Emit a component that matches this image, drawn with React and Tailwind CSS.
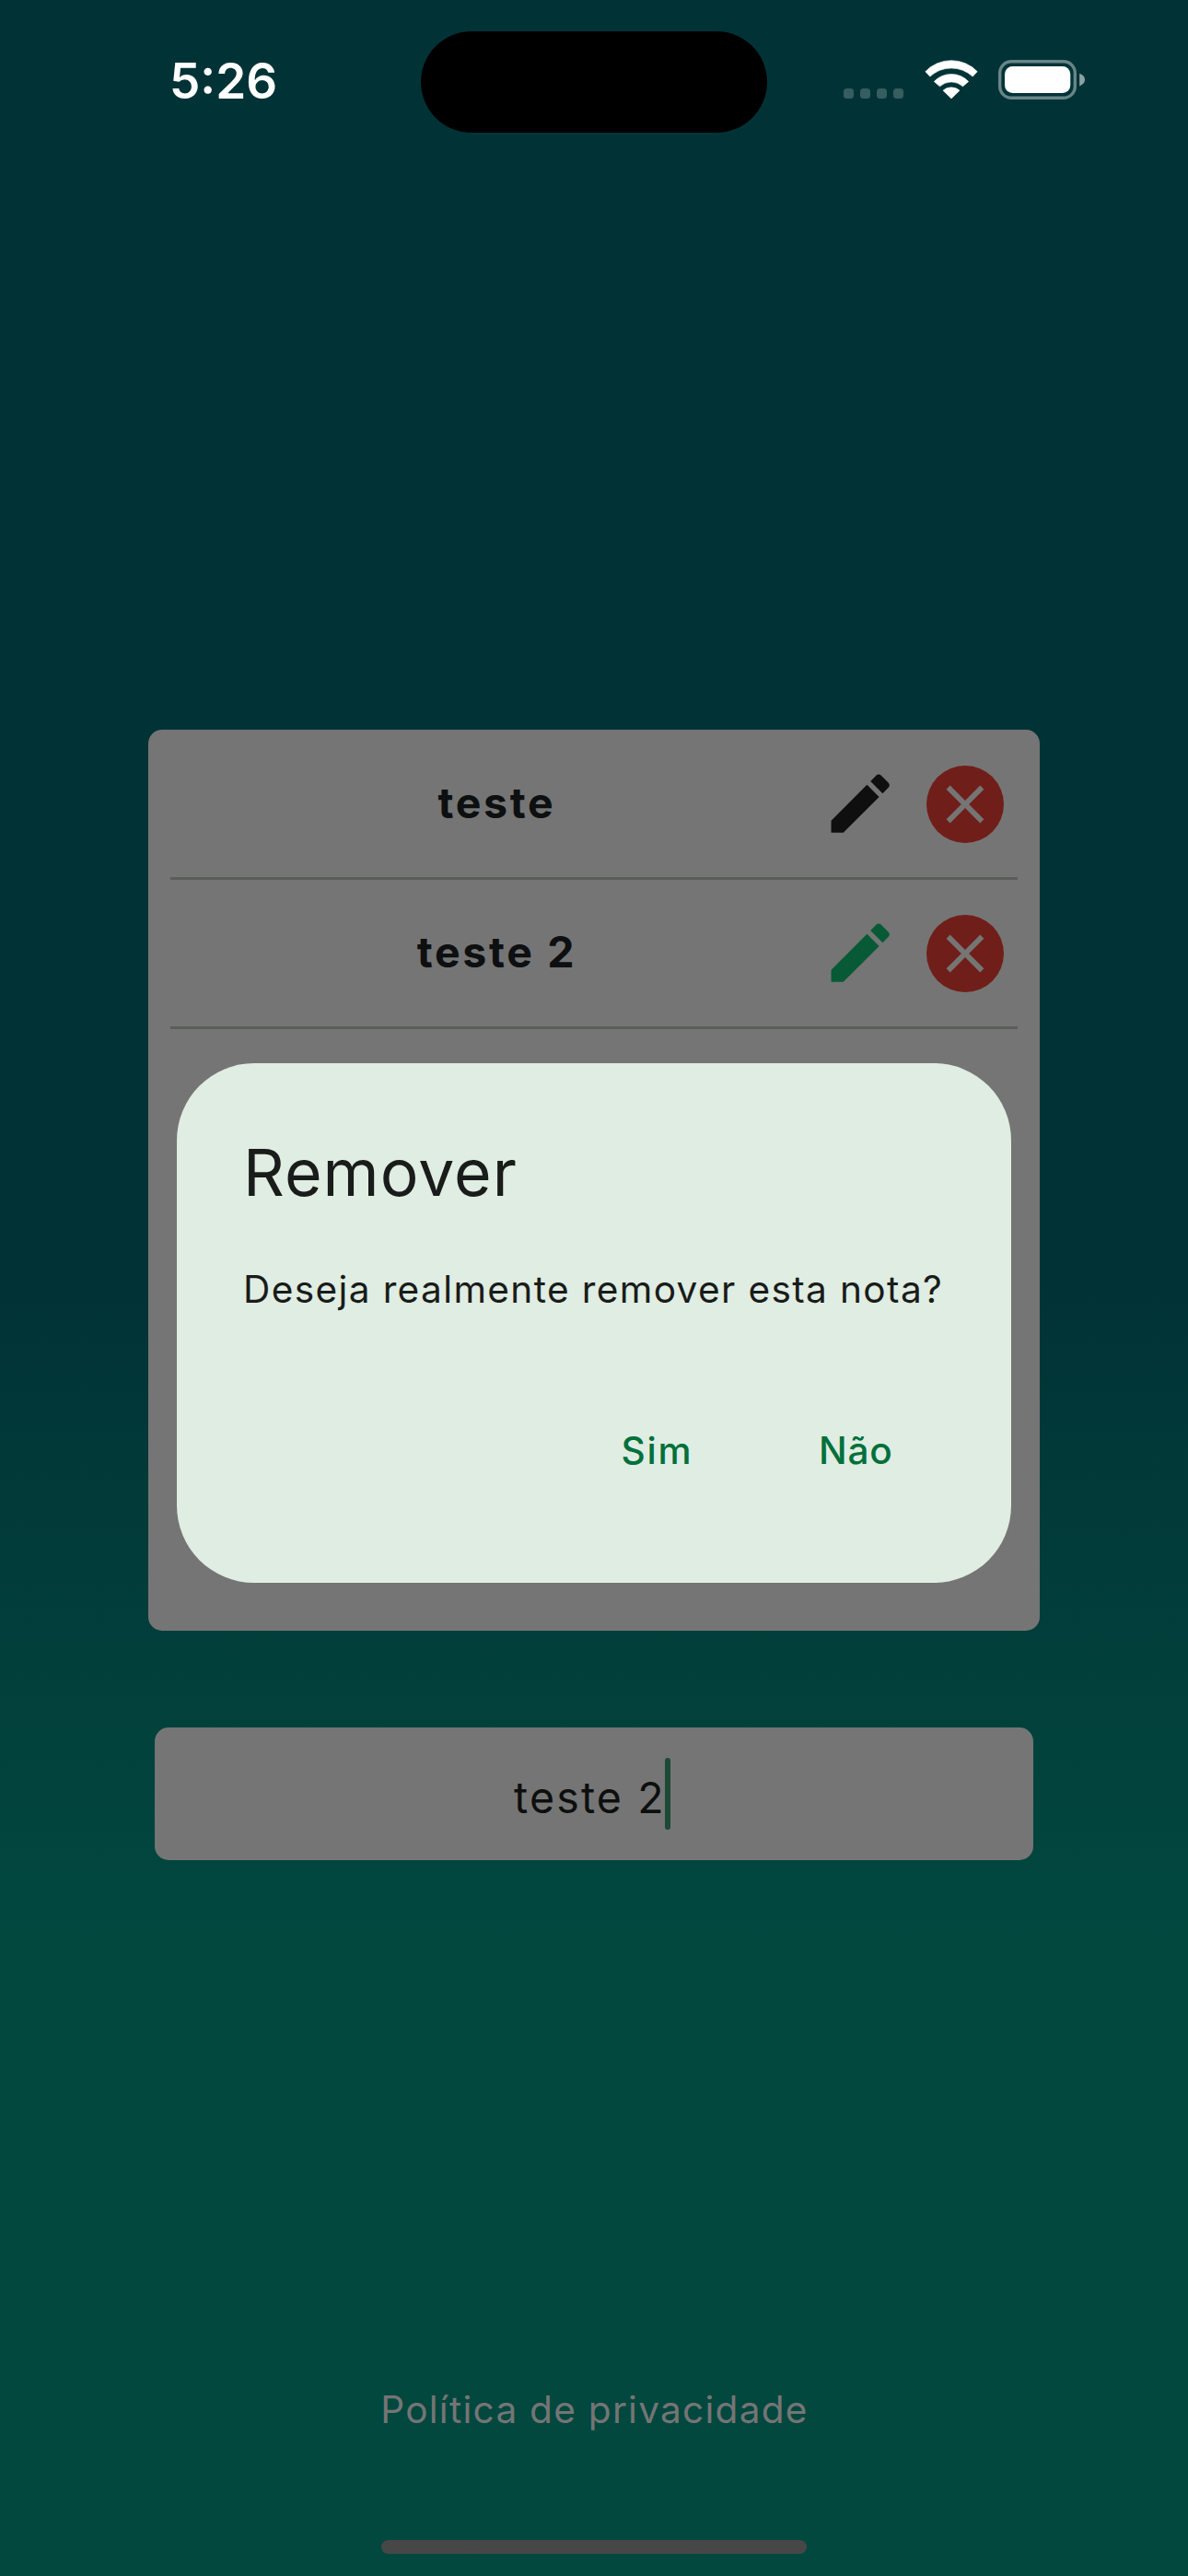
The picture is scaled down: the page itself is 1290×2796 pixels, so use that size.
import React from "react";

function StatusBar() {
  return (
    <header className="flex h-[178px] shrink-0 items-center pl-[184px]">
      <time className="mb-[2px] w-[273px] text-[53px] leading-none font-semibold text-white">
        5:26
      </time>
      <div className="h-[110px] w-[376px] rounded-full bg-black" />
      <div className="mt-[25px] ml-[83px] flex gap-[7px]">
        {[0, 1, 2, 3].map((dot) => (
          <span key={dot} className="size-[11px] rounded-[3.5px] bg-[#365d60]" />
        ))}
      </div>
      <svg className="mb-[6px] ml-[22.5px] h-[43px] w-[58px]" viewBox="0 0 58 43" fill="white" stroke="white" strokeWidth="0.6" strokeLinejoin="round">
        <path d="M.8 12.7A39 39 0 0 1 57.2 12.7L52.2 18.1A34 34 0 0 0 5.8 18.1Z" />
        <path d="M10.3 23.5A25.7 25.7 0 0 1 47.7 23.5L41.5 28.8A18.6 18.6 0 0 0 16.5 28.8Z" />
        <path d="M20 33.2A13.8 13.8 0 0 1 38 33.2L29 42Z" />
      </svg>
      <svg className="mb-[5px] ml-[22.5px] h-[43px] w-[95px]" viewBox="0 0 95 43">
        <rect x="1.7" y="1.7" width="81.6" height="39.6" rx="12.5" fill="none" stroke="#678688" strokeWidth="3.4" />
        <rect x="7" y="7" width="71.3" height="29" rx="8.5" fill="white" />
        <path d="M88.2 14.8C92 16.2 94 18.4 94 21.6S92 27 88.2 28.4Z" fill="#8ba3a4" />
      </svg>
    </header>
  );
}

function PencilIcon({ className }) {
  return (
    <svg className={className} viewBox="0 0 24 24" fill="currentColor">
      <path d="M3 17.25V21h3.75L17.81 9.94l-3.75-3.75L3 17.25zM20.71 7.04c.39-.39.39-1.02 0-1.41l-2.34-2.34c-.39-.39-1.02-.39-1.41 0l-1.83 1.83 3.75 3.75 1.83-1.83z" />
    </svg>
  );
}

function CloseIcon() {
  return (
    <svg className="size-[70px] text-[#757575]" viewBox="0 0 24 24" fill="currentColor">
      <path d="M19 6.41L17.59 5 12 10.59 6.41 5 5 6.41 10.59 12 5 17.59 6.41 19 12 13.41 17.59 19 19 17.59 13.41 12z" />
    </svg>
  );
}

function NoteRow({ text, active, first }) {
  return (
    <li className={first ? "flex h-[163px] items-center border-b-[3px] border-[#5a5d5a] pt-px" : "flex h-[162px] items-center border-b-[3px] border-[#5a5d5a]"}>
      <span className="flex-1 pb-[3px] pl-[2px] text-center text-[46.5px] leading-[60px] font-bold tracking-[2.65px] text-[#0d0f10]">
        {text}
      </span>
      <button className="mr-[29.3px]">
        <PencilIcon className={active ? "size-[84.4px] text-[#075a35]" : "size-[84.4px] text-[#0f0f0f]"} />
      </button>
      <button className="mr-[15.5px] flex size-[84px] items-center justify-center rounded-full bg-[#701e19]">
        <CloseIcon />
      </button>
    </li>
  );
}

function RemoveDialog() {
  return (
    <div role="dialog" className="absolute top-[1153.5px] left-[192px] h-[564px] w-[906px] rounded-[84px] bg-[#e0ede2] pt-[71px] pl-[72px]">
      <h2 className="text-[69.7px] leading-[96px] tracking-[1.06px] text-[#191c1a]">Remover</h2>
      <p className="mt-[49.5px] text-[40.6px] leading-[60px] tracking-[1.37px] whitespace-nowrap text-[#191c1a]">
        Deseja realmente remover esta nota?
      </p>
      <div className="mt-[114.5px] flex pl-[410.5px] text-[40.6px] leading-[60px] font-medium text-[#00703c]">
        <button className="w-[214.5px] text-left tracking-[1.8px]">Sim</button>
        <button className="tracking-[0.8px]">Não</button>
      </div>
    </div>
  );
}

export default function App() {
  return (
    <div className="relative flex h-[2796px] w-[1290px] flex-col overflow-hidden bg-linear-to-b from-[#013336] from-50% to-[#02483f] to-75% font-['Inter',sans-serif]">
      <StatusBar />
      <main className="flex flex-col items-center pt-[614px]">
        <ul className="h-[978.3px] w-[967.5px] rounded-[15px] bg-[#757575] px-[23.75px]">
          <NoteRow text="teste" first />
          <NoteRow text="teste 2" active />
        </ul>
        <div className="mt-[104.7px] flex h-[144px] w-[954px] items-center rounded-[15px] bg-[#757575] pl-[390px]">
          <span className="pt-[8px] text-[46.5px] leading-[60px] tracking-[2.16px] text-[#0d0f0e]">teste 2</span>
          <span className="-ml-[1px] h-[78px] w-[6px] rounded-full bg-[#1d4a36]" />
        </div>
      </main>
      <footer className="mt-[567px] flex flex-col items-center">
        <a className="pl-[1px] text-[40.6px] leading-[60px] tracking-[1.26px] text-[#757575]">Política de privacidade</a>
        <div className="mt-[111px] h-[15px] w-[462px] rounded-full bg-[#474747]" />
      </footer>
      <RemoveDialog />
    </div>
  );
}
